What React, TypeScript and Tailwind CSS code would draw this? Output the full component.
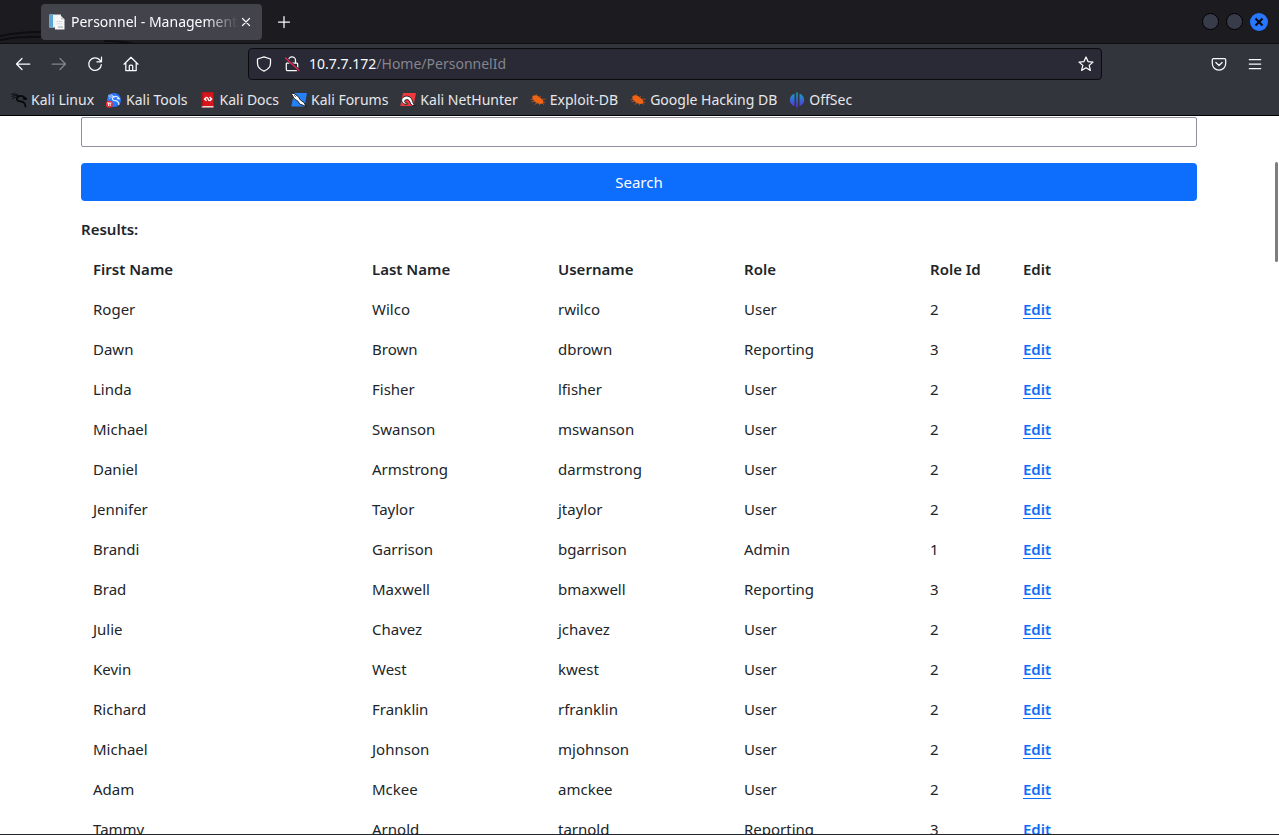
import type { ReactNode } from "react";

type Person = [string, string, string, string, number];

const people: Person[] = [
  ["Roger", "Wilco", "rwilco", "User", 2],
  ["Dawn", "Brown", "dbrown", "Reporting", 3],
  ["Linda", "Fisher", "lfisher", "User", 2],
  ["Michael", "Swanson", "mswanson", "User", 2],
  ["Daniel", "Armstrong", "darmstrong", "User", 2],
  ["Jennifer", "Taylor", "jtaylor", "User", 2],
  ["Brandi", "Garrison", "bgarrison", "Admin", 1],
  ["Brad", "Maxwell", "bmaxwell", "Reporting", 3],
  ["Julie", "Chavez", "jchavez", "User", 2],
  ["Kevin", "West", "kwest", "User", 2],
  ["Richard", "Franklin", "rfranklin", "User", 2],
  ["Michael", "Johnson", "mjohnson", "User", 2],
  ["Adam", "Mckee", "amckee", "User", 2],
  ["Tammy", "Arnold", "tarnold", "Reporting", 3],
];

function Line({ children, className = "" }: { children: ReactNode; className?: string }) {
  return (
    <svg
      viewBox="0 0 16 16"
      className={`size-4 shrink-0 ${className}`}
      fill="none"
      stroke="currentColor"
      strokeWidth="1.25"
      strokeLinecap="round"
      strokeLinejoin="round"
      aria-hidden="true"
    >
      {children}
    </svg>
  );
}

function Glyph({ children }: { children: ReactNode }) {
  return (
    <svg viewBox="0 0 16 16" className="size-4 shrink-0" aria-hidden="true">
      {children}
    </svg>
  );
}

const dragon = (
  <g fill="none" strokeLinecap="round" strokeLinejoin="round">
    <path d="M.6 2.400C4 1.200 6.600 2 8.200 4.300M.8 4.500C3.600 3 6 3.200 8.200 4.500M1.500 6.800c2-1.600 4-2 6.500-2.200" strokeWidth=".9" />
    <path d="M7.500 4.400c2.800-1 5.200-.6 6.800 1.800l1 .9-2.800-.4M7 5C4.800 7 6 9.400 9 9.400c3 0 5 1.300 5.500 5.200" strokeWidth="1.700" />
  </g>
);

const bug = (
  <Glyph>
    <g fill="#ef6414" stroke="#ef6414">
      <path d="M2.500 4.300C4 2.600 6.500 3 8.800 4.600l3.200 2.700c1.500 1.500 1.700 3 .9 4-2 1.300-4.700.8-7.200-1C3 8.400 1.800 6.200 2.500 4.300z" stroke="none" />
      <path d="M3 7.500H.8M4.500 9.500 1.500 9.800M7 11l-2.500 1.500M6 4l.8-1.800M9.500 5.500l1.700-1.500M11.500 7.200H15.500M12.500 9.800l2.800.7M9.500 11.500v1.800M12.500 11l1.300 1.800" strokeWidth=".6" fill="none" />
    </g>
  </Glyph>
);

const bookmarks: { label: string; icon: ReactNode }[] = [
  { label: "Kali Linux", icon: <Glyph><g stroke="#08080a">{dragon}</g></Glyph> },
  {
    label: "Kali Tools",
    icon: (
      <Glyph>
        <circle cx="8" cy="8" r="7" fill="#2777ff" />
        <g stroke="#dbe8ff" transform="translate(2 1.500) scale(.75)">{dragon}</g>
        <circle cx="3.300" cy="12.200" r="3.500" fill="#f02b33" />
        <path d="M1.200 11h4.200M2.500 11v3M4.200 11v3" stroke="#fff" strokeWidth=".9" />
      </Glyph>
    ),
  },
  {
    label: "Kali Docs",
    icon: (
      <Glyph>
        <path d="M2 .3h11.500v15.200H1.500V1.500z" fill="#d9151b" />
        <path d="M2 14h11.500v1.500H1.500z" fill="#e8d9d9" />
        <path d="M1.500 1.500 2.800.3V14l-1.300 1z" fill="#a30c12" />
        <path d="M6.600 5 4.600 7.200l2 1.600M9.600 5l2 1.900-2 2.100M7.200 5.300l2 3.500" fill="none" stroke="#fff" strokeWidth="1.400" />
      </Glyph>
    ),
  },
  {
    label: "Kali Forums",
    icon: (
      <Glyph>
        <path d="M3 1h13l-2.500 13.500H.3z" fill="#2580f5" />
        <path d="M0 1.200 3 1.500l4.500 3.300 1.700 3 3.800 2.700 2.200 4.300-3-1.500-3.500-1.300-1.900-3L3.500 7z" fill="#fff" stroke="#15171c" strokeWidth=".9" />
        <path d="m3 3 2 2" fill="none" stroke="#15171c" strokeWidth=".6" />
      </Glyph>
    ),
  },
  {
    label: "Kali NetHunter",
    icon: (
      <Glyph>
        <path d="M3 1h13l-2.500 13H.3z" fill="#f0383f" />
        <path
          d="M4.500 12C.8 10.300.8 6.500 4 4.800c3.500-1.800 7.300.2 8.200 3.400.6 2.200 1 3.800 3 5.600l-3-.5c-2-1-2-3.200-2.900-4.500C8 7 4.800 7.300 4.600 9.200c-.1 1.200 1 1.800 2.400 1.600v1.600z"
          fill="#fff"
          stroke="#15171c"
          strokeWidth=".9"
        />
      </Glyph>
    ),
  },
  { label: "Exploit-DB", icon: bug },
  { label: "Google Hacking DB", icon: bug },
  {
    label: "OffSec",
    icon: (
      <Glyph>
        <defs>
          <linearGradient id="offsec" x1="0" y1="0" x2="0" y2="1">
            <stop offset="0" stopColor="#11a8c4" />
            <stop offset="1" stopColor="#5a2de0" />
          </linearGradient>
        </defs>
        <path
          d="M7.200.5h1.600v15H7.200zM5.500 1.800v12.400C3 13.400.8 11.200.8 8S3 2.600 5.500 1.800zM10.500 1.800C13 2.600 15.200 4.800 15.200 8s-2.200 5.400-4.700 6.200z"
          fill="url(#offsec)"
        />
      </Glyph>
    ),
  },
];

function IconButton({ label, children, disabled }: { label: string; children: ReactNode; disabled?: boolean }) {
  return (
    <button type="button" aria-label={label} disabled={disabled} className="flex size-8 items-center justify-center text-[#fbfbfe] disabled:opacity-40">
      {children}
    </button>
  );
}

function TabStrip() {
  return (
    <div className="relative flex h-11 items-center border-b border-[#0c0c10] bg-[#1b1b20] pl-[41px] pr-2">
      <svg className="absolute left-0 top-0 h-11 w-40" viewBox="0 0 160 44" fill="none" aria-hidden="true">
        <path d="M0 36c20-4 44-5 64-2M0 40c20-4 40-4 60-1M104 41c12 0 22 1 30 3" stroke="#0e0e12" strokeWidth="2" />
      </svg>
      <div className="relative flex h-9 w-[221px] items-center rounded bg-[#42434b] pl-2 pr-2 text-[#fbfbfe]">
        <Glyph>
          <path d="M.5.500h11.500v13H.5z" fill="#e9f1f5" />
          <path d="M.5.500H4v13H.5z" fill="#5ea4d0" />
          <path d="M6 2h6l3.500 3.500V15.500H6z" fill="#f7f7f7" />
          <path d="M12 2v3.500h3.500zM7.500 7h6v.8h-6zM7.500 9.500h6v.8h-6zM9 12h5v2H9z" fill="#c9cdd0" />
        </Glyph>
        <span className="ml-1.5 flex-1 overflow-hidden whitespace-nowrap text-sm leading-6 [mask-image:linear-gradient(to_left,transparent,black_32px)]">
          Personnel - Management
        </span>
        <button type="button" aria-label="Close tab" className="flex size-4 items-center justify-center">
          <svg viewBox="0 0 16 16" className="size-4" stroke="currentColor" strokeWidth="1.200" strokeLinecap="round" aria-hidden="true">
            <path d="m4.500 4.500 7 7M11.500 4.500l-7 7" />
          </svg>
        </button>
      </div>
      <button type="button" aria-label="New tab" className="ml-1.5 flex size-8 items-center justify-center text-[#fbfbfe]">
        <Line><path d="M8 2.500v11M2.500 8h11" /></Line>
      </button>
      <div className="ml-auto flex items-center gap-[7px] pr-[3px]">
        <button type="button" aria-label="Minimize" className="size-[17px] rounded-full border border-black bg-[#383c4a]" />
        <button type="button" aria-label="Maximize" className="size-[17px] rounded-full border border-black bg-[#383c4a]" />
        <button type="button" aria-label="Close window" className="flex size-[18px] items-center justify-center rounded-full bg-[#2777ff]">
          <svg viewBox="0 0 10 10" className="size-2.5" stroke="#0b0b12" strokeWidth="2.200" aria-hidden="true">
            <path d="m1.500 1.500 7 7M8.500 1.500l-7 7" />
          </svg>
        </button>
      </div>
    </div>
  );
}

function NavBar() {
  return (
    <div className="flex h-10 items-center px-[7px]">
      <div className="flex gap-1">
        <IconButton label="Back"><Line><path d="M14.800 8H1.500M7 2.500 1.500 8 7 13.500" /></Line></IconButton>
        <IconButton label="Forward" disabled><Line><path d="M1.200 8h13.300M9 2.500 14.500 8 9 13.500" /></Line></IconButton>
        <IconButton label="Reload"><Line><path d="M14.300 8.600A6.300 6.300 0 1 1 12.800 4l1.300 1.500M14.500 1.200v4.600H9.900" /></Line></IconButton>
        <IconButton label="Home">
          <Line><path d="M1 8.200 8 1.300l7 6.900M2.800 6.800v7.700h10.400V6.800M6.300 14.400V10c0-.6.400-1 1-1h1.400c.6 0 1 .4 1 1v4.400" /></Line>
        </IconButton>
      </div>
      <div className="ml-[101px] mr-[101px] flex h-8 flex-1 items-center rounded border border-[#0b0b10] bg-[#292a35] px-[7px] text-[#fbfbfe]">
        <Line><path d="M8 .9 14.500 3v4.300c0 3.600-2.600 6.300-6.500 7.800C4.100 13.600 1.500 10.900 1.500 7.300V3z" /></Line>
        <Line className="ml-3">
          <path d="M4.500 7V4.300a3.500 3.500 0 0 1 7 0V7M3.300 7h9.400c.6 0 1 .4 1 1v5.500c0 .6-.4 1-1 1H3.300c-.6 0-1-.4-1-1V8c0-.6.400-1 1-1z" />
          <path d="m1.500 2 13.500 12.500" stroke="#292a35" strokeWidth="3" />
          <path d="m1.500 2 13.500 12.500" stroke="#e22850" strokeWidth="1.400" />
        </Line>
        <div className="ml-[9px] flex-1 text-sm leading-6">
          10.7.7.172<span className="text-[#85858d]">/Home/PersonnelId</span>
        </div>
        <button type="button" aria-label="Bookmark this page">
          <Line><path d="m8 1 2 4.600 5 .5-3.800 3.300 1.200 5L8 11.800l-4.400 2.600 1.200-5L1 6.100l5-.5z" /></Line>
        </button>
      </div>
      <div className="flex gap-1 pr-px">
        <IconButton label="Save to Pocket">
          <Line><path d="M2.500 2.500h11c.7 0 1.200.5 1.200 1.200V7.500a6.700 6.700 0 0 1-13.400 0V3.700c0-.7.5-1.200 1.200-1.200zM4.900 6.500 8 9.500l3.100-3" /></Line>
        </IconButton>
        <IconButton label="Menu"><Line><path d="M2.300 3.500h11.400M2.300 8h11.400M2.300 12.500h11.400" /></Line></IconButton>
      </div>
    </div>
  );
}

export default function App() {
  return (
    <div className="flex h-screen flex-col overflow-hidden border-b border-[#23252e] bg-white font-['Noto_Sans','Open_Sans',sans-serif] text-[#212529]">
      <header className="shrink-0 border-b border-black bg-[#33353d]">
        <TabStrip />
        <NavBar />
        <nav aria-label="Bookmarks" className="flex h-[31px] items-center gap-3 pl-[11px] text-sm text-[#e6e7ea]">
          {bookmarks.map((b) => (
            <a key={b.label} href="#" className="flex items-center gap-1 whitespace-nowrap">
              {b.icon}
              {b.label}
            </a>
          ))}
        </nav>
      </header>
      <main className="relative min-h-0 flex-1 overflow-hidden pt-px pr-px text-[15px] leading-6">
        <div className="mx-auto max-w-[1140px] px-3">
          <form>
            <input type="text" aria-label="Search personnel" className="mb-4 block h-[30px] w-full rounded-xs border border-[#8f8f9d] px-2" />
            <button type="button" className="block h-[38px] w-full rounded bg-[#0d6efd] text-white">Search</button>
          </form>
          <h2 className="mt-4 mb-2 font-semibold">Results:</h2>
          <table className="w-full table-fixed text-left">
            <colgroup>
              <col className="w-3/12" />
              <col className="w-2/12" />
              <col className="w-2/12" />
              <col className="w-2/12" />
              <col className="w-1/12" />
              <col className="w-2/12" />
            </colgroup>
            <thead>
              <tr>
                {["First Name", "Last Name", "Username", "Role", "Role Id", "Edit"].map((h) => (
                  <th key={h} scope="col" className="px-3 py-2 font-semibold whitespace-nowrap">{h}</th>
                ))}
              </tr>
            </thead>
            <tbody>
              {people.map((p) => (
                <tr key={p[2]}>
                  {p.map((value, i) => (
                    <td key={i} className="px-3 py-2">{value}</td>
                  ))}
                  <td className="px-3 py-2">
                    <a href="#" className="font-semibold text-[#0d6efd] underline decoration-1 underline-offset-3">Edit</a>
                  </td>
                </tr>
              ))}
            </tbody>
          </table>
        </div>
        <div className="absolute right-px top-[46px] h-[100px] w-[3px] rounded-sm bg-[#7b7f80]" />
      </main>
    </div>
  );
}
